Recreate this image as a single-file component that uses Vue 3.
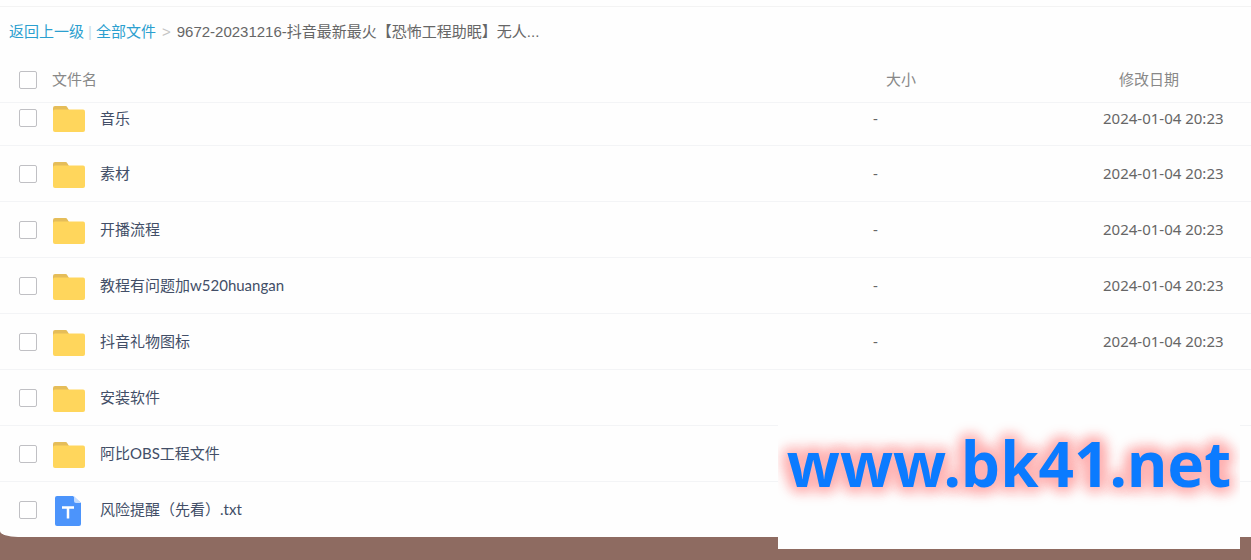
<template>
  <main class="page">
    <section class="panel">
      <nav class="crumbs">
        <a href="#">返回上一级</a>
        <span class="bar">|</span>
        <a href="#">全部文件</a>
        <span class="arrow">&gt;</span>
        <span class="current">9672-20231216-抖音最新最火【恐怖工程助眠】无人...</span>
      </nav>
      <table class="files">
        <colgroup>
          <col class="col-check" />
          <col class="col-icon" />
          <col />
          <col class="col-size" />
          <col class="col-date" />
        </colgroup>
        <thead>
          <tr>
            <th class="check"><input v-model="all" type="checkbox" aria-label="全选" @change="toggleAll" /></th>
            <th class="name" colspan="2">文件名</th>
            <th class="size">大小</th>
            <th class="date">修改日期</th>
          </tr>
        </thead>
        <tbody>
          <tr v-for="file in files" :key="file.name">
            <td class="check"><input :id="file.name" v-model="file.checked" type="checkbox" /></td>
            <td class="icon">
              <svg v-if="file.type === 'folder'" width="34" height="30" viewBox="0 -2 34 30">
                <path d="M1 3a2 2 0 0 1 2-2h10.500a2 2 0 0 1 1.800 1.200L17 5v5H1z" fill="#e5bd59" />
                <rect x="1" y="4.500" width="32" height="22.500" rx="2" fill="#ffd65c" />
              </svg>
              <svg v-else width="34" height="34" viewBox="0 -2 34 34">
                <path d="M5 1h16l8 7v21a2 2 0 0 1-2 2H5a2 2 0 0 1-2-2V3a2 2 0 0 1 2-2z" fill="#4c94fb" />
                <path d="M22 1l7 7h-5a2 2 0 0 1-2-2z" fill="#c3dcff" />
                <path d="M10 12.500h12M16 12.500v11" fill="none" stroke="#fff" stroke-width="2.500" />
              </svg>
            </td>
            <td class="name"><label :for="file.name">{{ file.name }}</label></td>
            <td class="size">{{ file.size }}</td>
            <td class="date">{{ file.date }}</td>
          </tr>
        </tbody>
      </table>
    </section>
    <div class="mark">www.bk41.net</div>
  </main>
</template>

<script setup>
import { ref } from 'vue'

const all = ref(false)
const files = ref([
  { name: '音乐', type: 'folder', size: '-', date: '2024-01-04 20:23', checked: false },
  { name: '素材', type: 'folder', size: '-', date: '2024-01-04 20:23', checked: false },
  { name: '开播流程', type: 'folder', size: '-', date: '2024-01-04 20:23', checked: false },
  { name: '教程有问题加w520huangan', type: 'folder', size: '-', date: '2024-01-04 20:23', checked: false },
  { name: '抖音礼物图标', type: 'folder', size: '-', date: '2024-01-04 20:23', checked: false },
  { name: '安装软件', type: 'folder', size: '', date: '', checked: false },
  { name: '阿比OBS工程文件', type: 'folder', size: '', date: '', checked: false },
  { name: '风险提醒（先看）.txt', type: 'txt', size: '', date: '', checked: false }
])

function toggleAll() {
  files.value.forEach((f) => { f.checked = all.value })
}
</script>

<style>
body { margin: 0; background: #8e6b61; }
</style>

<style scoped>
.page {
  position: relative;
  min-height: 100vh;
  font-family: "Noto Sans", "Noto Sans CJK SC", sans-serif;
  font-size: 15px;
  line-height: 20px;
}
.panel {
  background: #fefefe;
  border-bottom-left-radius: 18px 6px;
  padding-top: 6px;
}
.crumbs {
  display: flex;
  align-items: center;
  height: 50px;
  padding-left: 9px;
  border-top: 1px solid #f3f3f3;
  font-family: "Liberation Sans", "Noto Sans CJK SC", sans-serif;
  white-space: nowrap;
}
.crumbs a { color: #2b9fcf; text-decoration: none; }
.bar { margin: 0 4px; color: #c9dbe6; }
.arrow { margin: 0 6px; color: #c4c4c4; }
.current { color: #666; }
.files {
  width: 100%;
  table-layout: fixed;
  border-collapse: separate;
  border-spacing: 0;
}
.col-check { width: 52px; }
.col-icon { width: 48px; }
.col-size { width: 230px; }
.col-date { width: 148px; }
th, td {
  box-sizing: border-box;
  padding: 0;
  text-align: left;
  vertical-align: middle;
  border-bottom: 1px solid #f3f4f6;
}
th { height: 46px; font-weight: normal; color: #888; }
td { height: 56px; color: #666; }
.name, .size, .date { padding-bottom: 2px; }
td.name {
  color: #424e67;
  font-family: Lato, "Noto Sans CJK SC", sans-serif;
}
/* the first row is partly scrolled under the header */
tbody tr:first-child td { height: 43px; padding-bottom: 12px; }
tbody tr:last-child td { height: 55px; border-bottom: none; }
.check { padding-left: 19px; }
th.size { padding-left: 13px; }
th.date { padding-left: 16px; }
svg, label { display: block; }
input {
  appearance: none;
  display: block;
  box-sizing: border-box;
  width: 18px;
  height: 18px;
  margin: 0;
  border: 1px solid #c0c0c4;
  border-radius: 2px;
  background: #fff;
}
input:checked { background: #2b9fcf; }
.mark {
  position: absolute;
  right: 11px;
  bottom: 11px;
  box-sizing: border-box;
  width: 462px;
  height: 128px;
  overflow: hidden;
  background: #fefefe;
  color: #0b7bff;
  font-size: 62px;
  font-weight: bold;
  line-height: 84px;
  text-align: center;
  text-shadow: 0 0 12px #ffb0b0, 0 0 14px #ffb0b0, 0 0 16px #ffb0b0, 0 0 18px #ffb0b0, 0 0 20px #ffb8b8;
}
</style>
